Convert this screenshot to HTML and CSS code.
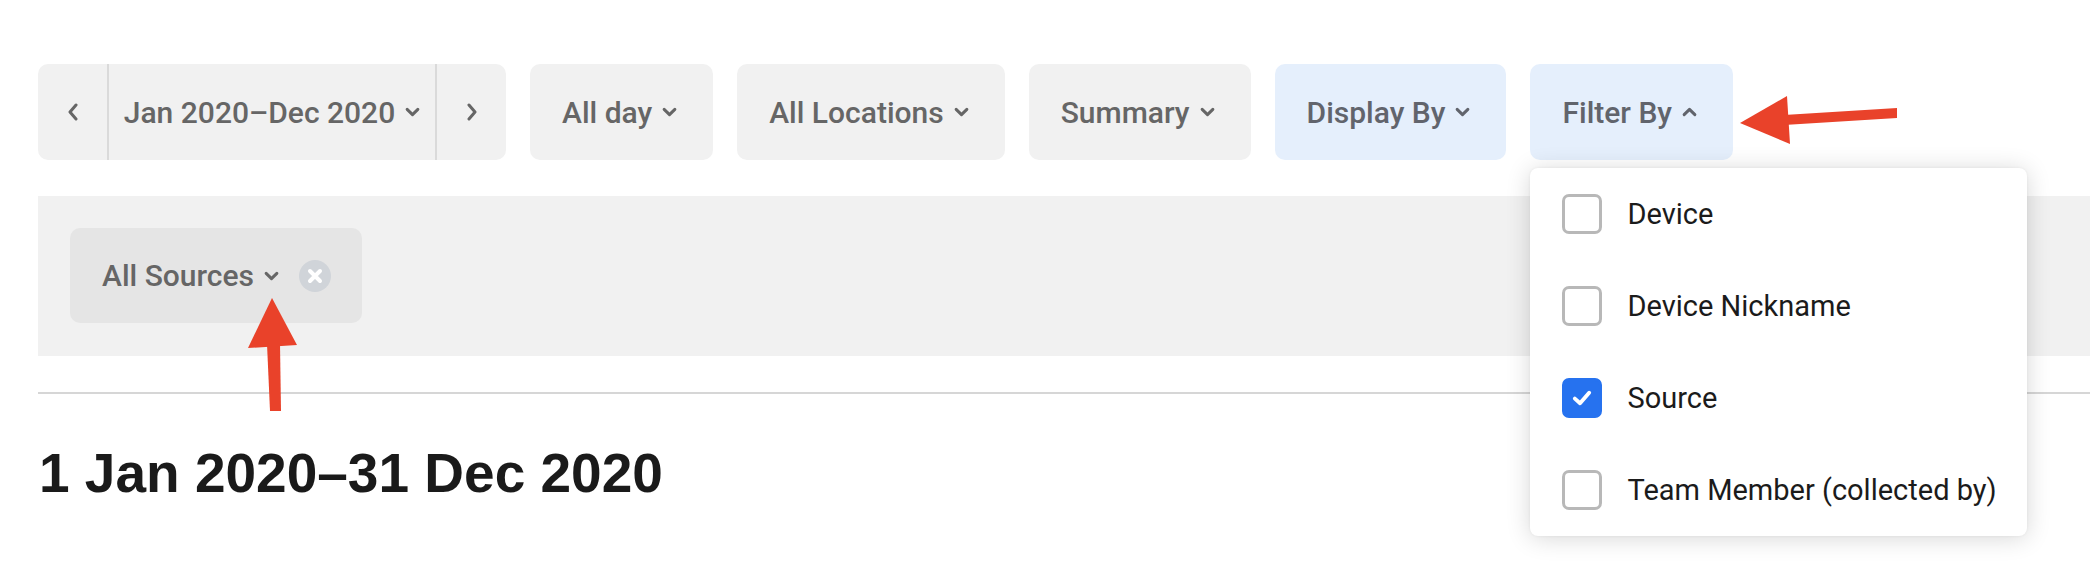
FILE: index.html
```html
<!DOCTYPE html>
<html lang="en">
<head>
<meta charset="utf-8">
<title>Sales report filters</title>
<link rel="stylesheet" href="styles.css">
</head>
<body>
<div class="page">
  <div class="toolbar">
    <div class="date-group">
      <button class="seg seg-arrow" aria-label="Previous">
        <svg class="ico-side" viewBox="0 0 12 18"><path d="M9 2 L3 9 L9 16"/></svg>
      </button>
      <button class="seg seg-main">Jan 2020–Dec 2020
        <svg class="chev" viewBox="0 0 14 9"><path d="M2 2 L7 7 L12 2"/></svg>
      </button>
      <button class="seg seg-arrow" aria-label="Next">
        <svg class="ico-side" viewBox="0 0 12 18"><path d="M3 2 L9 9 L3 16"/></svg>
      </button>
    </div>
    <button class="btn">All day<svg class="chev" viewBox="0 0 14 9"><path d="M2 2 L7 7 L12 2"/></svg></button>
    <button class="btn">All Locations<svg class="chev" viewBox="0 0 14 9"><path d="M2 2 L7 7 L12 2"/></svg></button>
    <button class="btn">Summary<svg class="chev" viewBox="0 0 14 9"><path d="M2 2 L7 7 L12 2"/></svg></button>
    <button class="btn btn-blue">Display By<svg class="chev" viewBox="0 0 14 9"><path d="M2 2 L7 7 L12 2"/></svg></button>
    <div class="menu-wrap">
      <button class="btn btn-blue">Filter By<svg class="chev" viewBox="0 0 14 9"><path d="M2 7 L7 2 L12 7"/></svg></button>
      <div class="menu">
        <label class="menu-item"><span class="cb"></span>Device</label>
        <label class="menu-item"><span class="cb"></span>Device Nickname</label>
        <label class="menu-item"><span class="cb cb-on"><svg viewBox="0 0 20 20"><path d="M4.5 10.5 L8.5 14 L15.5 6"/></svg></span>Source</label>
        <label class="menu-item"><span class="cb"></span>Team Member (collected by)</label>
      </div>
    </div>
  </div>

  <div class="filters">
    <div class="chip">
      <span class="chip-label">All Sources</span>
      <svg class="chev" viewBox="0 0 14 9"><path d="M2 2 L7 7 L12 2"/></svg>
      <span class="clear"><svg viewBox="0 0 32 32"><path d="M11 11 L21 21 M21 11 L11 21"/></svg></span>
    </div>
  </div>

  <div class="rule"></div>

  <h1 class="title">1 Jan 2020–31 Dec 2020</h1>
</div>

<svg class="annot" viewBox="0 0 2090 588" width="2090" height="588">
  <polygon points="1740,123 1787,96 1790,144"/>
  <polygon points="1784,115 1897,108 1897,118 1784,125"/>
  <polygon points="272,298 248,348 297,345"/>
  <polygon points="267,344 280,344 281,411 270,411"/>
</svg>
</body>
</html>
```

FILE: styles.css
```css
* { box-sizing: border-box; }

html, body {
  margin: 0;
  padding: 0;
  background: #ffffff;
}

body {
  width: 2090px;
  height: 588px;
  overflow: hidden;
  position: relative;
  font-family: Roboto, "Liberation Sans", Arial, sans-serif;
}

.page {
  padding: 64px 0 0 38px;
}

/* ---------- toolbar ---------- */
.toolbar {
  display: flex;
  align-items: flex-start;
  gap: 24px;
}

button {
  font-family: inherit;
  border: 0;
  margin: 0;
  cursor: pointer;
}

.date-group {
  display: flex;
  height: 96px;
  background: #f1f1f1;
  border-radius: 10px;
  overflow: hidden;
}

.seg {
  height: 96px;
  background: transparent;
  display: flex;
  align-items: center;
  justify-content: center;
  color: #666666;
  font-size: 30px;
  font-weight: 500;
  padding: 0;
}

.seg-arrow { width: 69px; }
.seg-main {
  width: 330px;
  border-left: 2px solid #dadada;
  border-right: 2px solid #dadada;
  gap: 10px;
}

.ico-side {
  width: 12px;
  height: 18px;
  fill: none;
  stroke: #666666;
  stroke-width: 3;
  stroke-linecap: round;
  stroke-linejoin: round;
}

.btn {
  height: 96px;
  display: flex;
  align-items: center;
  gap: 10px;
  padding: 0 36px 0 32px;
  background: #f1f1f1;
  border-radius: 10px;
  color: #666666;
  font-size: 30px;
  font-weight: 500;
  white-space: nowrap;
}

.btn-blue {
  background: #e5effc;
  color: #61646c;
}

.chev {
  width: 15px;
  height: 10px;
  fill: none;
  stroke: currentColor;
  stroke-width: 2.8;
  stroke-linecap: round;
  stroke-linejoin: round;
  flex: none;
}

/* ---------- dropdown menu ---------- */
.menu-wrap {
  position: relative;
}

.menu {
  position: absolute;
  top: calc(100% + 8px);
  left: 0;
  width: 497px;
  background: #ffffff;
  border-radius: 8px;
  box-shadow: 0 2px 24px rgba(0, 0, 0, 0.16), 0 0 3px rgba(0, 0, 0, 0.06);
  z-index: 5;
}

.menu-item {
  height: 92px;
  display: flex;
  align-items: center;
  gap: 25px;
  padding-left: 32px;
  font-size: 29px;
  font-weight: 400;
  color: #1b1b1b;
  white-space: nowrap;
}

.cb {
  width: 40px;
  height: 40px;
  border: 3px solid #b8b8b8;
  border-radius: 7px;
  display: flex;
  align-items: center;
  justify-content: center;
  flex: none;
}

.cb-on {
  background: #2672ef;
  border-color: #2672ef;
}

.cb-on svg {
  width: 26px;
  height: 26px;
  fill: none;
  stroke: #ffffff;
  stroke-width: 3;
  stroke-linecap: round;
  stroke-linejoin: round;
}

/* ---------- active filters panel ---------- */
.filters {
  margin-top: 36px;
  height: 160px;
  background: #f1f1f1;
  padding: 32px 0 0 32px;
}

.chip {
  display: inline-flex;
  align-items: center;
  height: 95px;
  width: 292px;
  padding-left: 32px;
  background: #e5e5e5;
  border-radius: 10px;
  color: #666666;
  font-size: 30px;
  font-weight: 500;
}

.chip .chev {
  margin-left: 10px;
}

.clear {
  margin-left: 20px;
  width: 32px;
  height: 32px;
  border-radius: 50%;
  background: #d0d4d9;
  display: flex;
}

.clear svg {
  width: 32px;
  height: 32px;
  fill: none;
  stroke: #ffffff;
  stroke-width: 4;
  stroke-linecap: round;
}

.rule {
  margin-top: 36px;
  height: 2px;
  background: #d6d6d6;
}

.title {
  margin: 52px 0 0 1px;
  font-family: "Liberation Sans", Arial, sans-serif;
  font-size: 55px;
  line-height: 1;
  font-weight: 700;
  color: #1a1a1a;
}

/* ---------- annotation arrows ---------- */
.annot {
  position: absolute;
  left: 0;
  top: 0;
  pointer-events: none;
  z-index: 10;
}

.annot polygon {
  fill: #e9422a;
}
```
